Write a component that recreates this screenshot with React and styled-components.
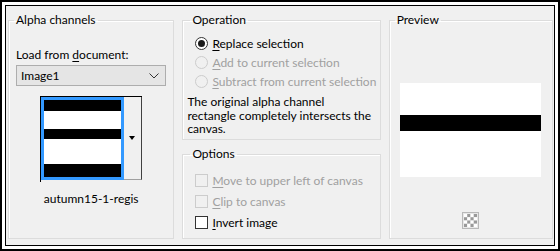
import styled, { createGlobalStyle } from "styled-components";

const GlobalStyle = createGlobalStyle`
  html, body {
    margin: 0;
    padding: 0;
    background: #ffffff;
  }
  body {
    font-family: Lato, "Noto Sans", sans-serif;
    font-size: 12px;
    color: #000;
  }
`;

const Frame = styled.div`
  width: 560px;
  height: 251px;
  box-sizing: border-box;
  border: 2px solid #000;
  padding: 3px;
  background: #fff;
`;

const Dialog = styled.div`
  height: 100%;
  box-sizing: border-box;
  border: 1px solid #000;
  background: #f0f0f0;
  padding: 6px 1px 6px 2px;
  display: flex;
  gap: 8px;
`;

const Column = styled.div`
  display: flex;
  flex-direction: column;
  gap: 6px;
  width: ${(p) => p.$width}px;
`;

const Group = styled.fieldset`
  margin: 0;
  min-width: 0;
  border: 1px solid #dcdcdc;
  box-shadow: inset 1px 1px 0 #fff;
  padding: ${(p) => p.$pad || "0 7px"};
  height: ${(p) => p.$height}px;
  box-sizing: border-box;
  display: flex;
  flex-direction: column;
  align-items: ${(p) => (p.$center ? "center" : "stretch")};
`;

const Legend = styled.legend`
  padding: 0 2px;
  margin-left: ${(p) => p.$offset || -2}px;
  line-height: 16px;
`;

const Label = styled.div`
  line-height: 16px;
  margin-top: ${(p) => p.$top || 0}px;
  color: ${(p) => (p.$disabled ? "#a0a0a0" : "#000")};
  text-align: ${(p) => (p.$center ? "center" : "left")};
`;

const Key = styled.span`
  text-decoration: underline;
  text-underline-offset: 2px;
`;

const Combo = styled.div`
  margin-top: 2px;
  height: 21px;
  box-sizing: border-box;
  border: 1px solid #adadad;
  background: #e5e5e5;
  display: flex;
  align-items: center;
  justify-content: space-between;
  padding: 0 6px 0 4px;
`;

const Thumb = styled.div`
  margin: 10px auto 0;
  width: 102px;
  height: 86px;
  box-sizing: border-box;
  border-top: 1px solid #000;
  border-left: 1px solid #000;
  display: flex;
`;

const ThumbImage = styled.div`
  width: 83px;
  height: 83px;
  box-sizing: border-box;
  border: 3px solid #3399ff;
  background: #fff;
  display: flex;
`;

const ThumbButton = styled.div`
  flex: 1;
  height: 83px;
  box-sizing: border-box;
  border-right: 1px solid #404040;
  border-bottom: 1px solid #a0a0a0;
  background: #f0f0f0;
  display: flex;
  align-items: center;
  justify-content: center;
  padding-right: 1px;
`;

const Arrow = styled.span`
  width: 0;
  height: 0;
  border-left: 3.5px solid transparent;
  border-right: 3.5px solid transparent;
  border-top: 4px solid #000;
`;

const Option = styled.div`
  display: flex;
  align-items: center;
  gap: 4px;
  height: ${(p) => p.$height || 19}px;
  margin-left: 8px;
  margin-top: ${(p) => p.$top || 0}px;
  white-space: nowrap;
  color: ${(p) => (p.$disabled ? "#a0a0a0" : "#000")};
`;

const Radio = styled.span`
  flex: none;
  width: 13px;
  height: 13px;
  box-sizing: border-box;
  border-radius: 50%;
  border: 1px solid ${(p) => (p.$disabled ? "#cccccc" : "#333")};
  background: ${(p) => (p.$disabled ? "#f0f0f0" : "#fff")};
  display: flex;
  align-items: center;
  justify-content: center;
  &::after {
    content: "";
    width: 7px;
    height: 7px;
    border-radius: 50%;
    background: #1a1a1a;
    display: ${(p) => (p.$checked ? "block" : "none")};
  }
`;

const Check = styled.span`
  flex: none;
  width: 13px;
  height: 13px;
  box-sizing: border-box;
  border: 1px solid ${(p) => (p.$disabled ? "#cccccc" : "#333")};
  background: ${(p) => (p.$disabled ? "#f0f0f0" : "#fff")};
`;

const Note = styled.p`
  margin: 4px 0 0;
  line-height: 13.5px;
`;

const PreviewCanvas = styled.div`
  margin-top: 55px;
  width: 141px;
  height: 94px;
  background: #fff;
  display: flex;
  flex-direction: column;
`;

const Band = styled.div`
  margin-top: 32px;
  height: 16px;
  background: #000;
`;

const CheckerButton = styled.div`
  margin-top: 35px;
  width: 17px;
  height: 17px;
  box-sizing: border-box;
  border: 1px solid #b8b8b8;
  background: #e8e8e8;
  display: flex;
  align-items: center;
  justify-content: center;
`;

const Chevron = () => (
  <svg width="10" height="6" viewBox="0 0 10 6">
    <polyline points="0.5,0.5 5,5 9.5,0.5" fill="none" stroke="#333" strokeWidth="1" />
  </svg>
);

const Checker = () => (
  <svg width="13" height="13" viewBox="0 0 12 12">
    {[0, 1, 2, 3].map((r) =>
      [0, 1, 2, 3].map((c) => (
        <rect
          key={`${r}-${c}`}
          x={c * 3}
          y={r * 3}
          width="3"
          height="3"
          fill={(r + c) % 2 === 0 ? "#ffffff" : "#9a9a9a"}
        />
      ))
    )}
  </svg>
);

const AlphaPicture = () => (
  <svg width="77" height="77" viewBox="0 0 77 77">
    <rect x="0" y="0" width="77" height="77" fill="#fff" />
    <rect x="0" y="0" width="77" height="11" fill="#000" />
    <rect x="0" y="29" width="77" height="10" fill="#000" />
    <rect x="0" y="64" width="77" height="13" fill="#000" />
  </svg>
);

const App = () => {
  return (
    <>
      <GlobalStyle />
      <Frame>
        <Dialog>
          <Column $width={167}>
            <Group $height={227}>
              <Legend>Alpha channels</Legend>
              <Label $top={19}>
                Load from <Key>d</Key>ocument:
              </Label>
              <Combo>
                <span>Image1</span>
                <Chevron />
              </Combo>
              <Thumb>
                <ThumbImage>
                  <AlphaPicture />
                </ThumbImage>
                <ThumbButton>
                  <Arrow />
                </ThumbButton>
              </Thumb>
              <Label $top={9} $center>
                autumn15-1-regis
              </Label>
            </Group>
          </Column>

          <Column $width={199}>
            <Group $height={128} $pad="0 0 0 4px">
              <Legend $offset={3}>Operation</Legend>
              <Option $height={20} $top={5}>
                <Radio $checked />
                <span>
                  <Key>R</Key>eplace selection
                </span>
              </Option>
              <Option $disabled>
                <Radio $disabled />
                <span>
                  <Key>A</Key>dd to current selection
                </span>
              </Option>
              <Option $disabled>
                <Radio $disabled />
                <span>
                  <Key>S</Key>ubtract from current selection
                </span>
              </Option>
              <Note>
                The original alpha channel
                <br />
                rectangle completely intersects the
                <br />
                canvas.
              </Note>
            </Group>
            <Group $height={93} $pad="0 0 0 4px">
              <Legend $offset={3}>Options</Legend>
              <Option $disabled $height={21} $top={8}>
                <Check $disabled />
                <span>
                  <Key>M</Key>ove to upper left of canvas
                </span>
              </Option>
              <Option $disabled $height={21}>
                <Check $disabled />
                <span>
                  <Key>C</Key>lip to canvas
                </span>
              </Option>
              <Option $height={21}>
                <Check />
                <span>
                  <Key>I</Key>nvert image
                </span>
              </Option>
            </Group>
          </Column>

          <Column $width={165}>
            <Group $height={227} $center>
              <Legend>Preview</Legend>
              <PreviewCanvas>
                <Band />
              </PreviewCanvas>
              <CheckerButton>
                <Checker />
              </CheckerButton>
            </Group>
          </Column>
        </Dialog>
      </Frame>
    </>
  );
};

export default App;
